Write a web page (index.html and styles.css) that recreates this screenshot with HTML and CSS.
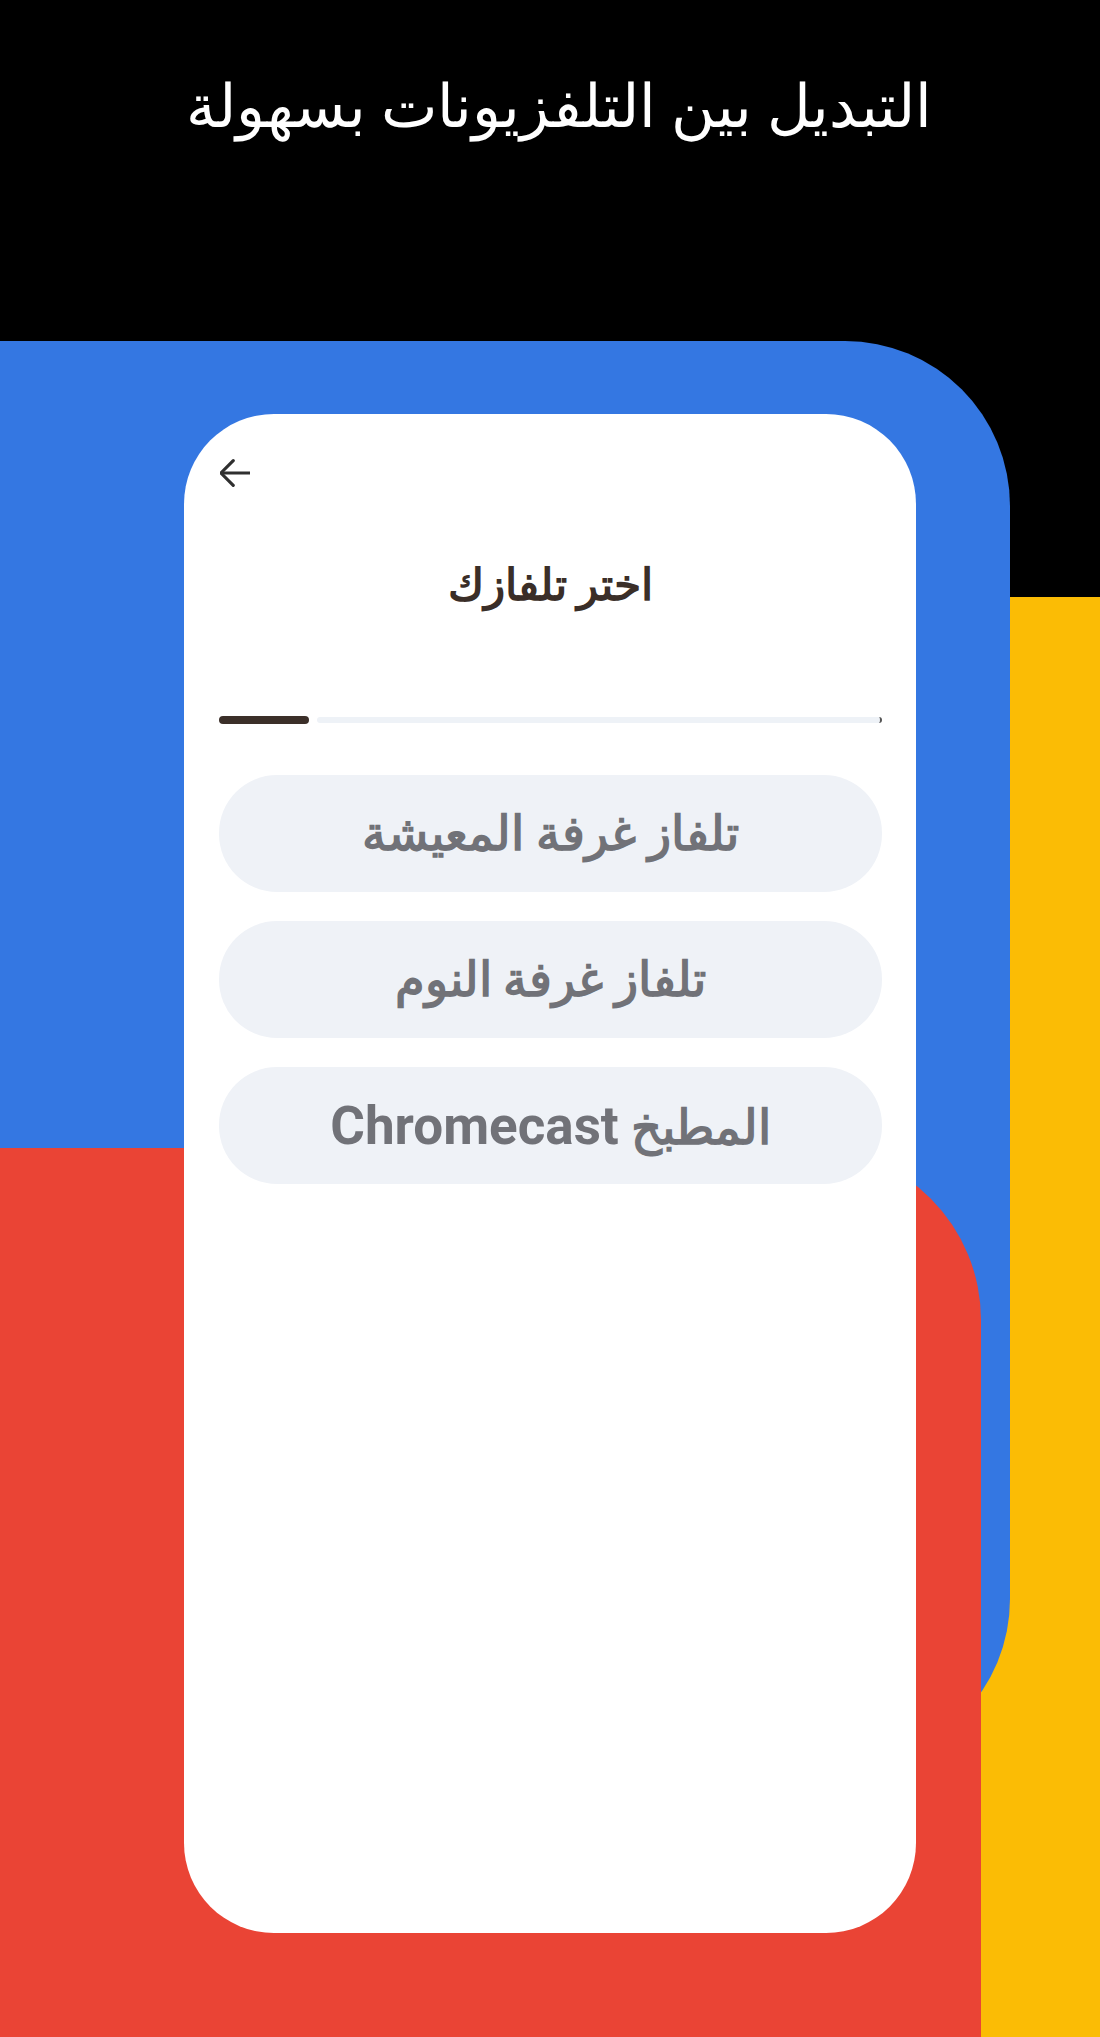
FILE: index.html
```html
<!DOCTYPE html>
<html lang="ar" dir="rtl">
<head>
    <meta charset="UTF-8">
    <meta name="viewport" content="width=device-width, initial-scale=1.0">
    <title>التبديل بين التلفزيونات</title>
    <link rel="stylesheet" href="styles.css">
</head>
<body>
    <header class="hero">
        <h1>التبديل بين التلفزيونات بسهولة</h1>
    </header>

    <main class="stage">
        <div class="shape yellow"></div>
        <div class="shape blue"></div>
        <div class="shape red"></div>

        <section class="phone">
            <div class="topbar">
                <svg class="back" width="30" height="30" viewBox="3.5 3.5 17 17" fill="none" stroke="#2f2f2f" stroke-width="1.8" stroke-linecap="round" stroke-linejoin="round">
                    <path d="M20 12H4.5"/>
                    <path d="M11 5l-7 7 7 7"/>
                </svg>
            </div>
            <h2 class="screen-title">اختر تلفازك</h2>
            <div class="progress">
                <span class="done"></span>
                <span class="track"></span>
            </div>
            <div class="tv-list">
                <button class="tv">تلفاز غرفة المعيشة</button>
                <button class="tv">تلفاز غرفة النوم</button>
                <button class="tv">المطبخ <span class="en">Chromecast</span></button>
            </div>
        </section>
    </main>
</body>
</html>
```
FILE: styles.css
```css
body {
    margin: 0;
    padding: 0;
    background-color: #000;
    font-family: 'Roboto', sans-serif;
    width: 1100px;
    height: 2037px;
    overflow: hidden;
}

.hero {
    height: 341px;
    direction: rtl;
}

.hero h1 {
    margin: 0;
    padding: 59px 0 0 18px;
    text-align: center;
    color: #fff;
    font-size: 60px;
    font-weight: normal;
    line-height: 96px;
}

/* all layers share one grid cell and stack in order */
.stage {
    display: grid;
    height: 1696px;
    direction: ltr;
}

.stage > * {
    grid-area: 1 / 1;
}

.shape {
    align-self: start;
    justify-self: start;
}

.yellow {
    background-color: #fbbc05;
    margin: 256px 0 0 900px;
    width: 200px;
    height: 1440px;
}

.blue {
    background-color: #3477e2;
    width: 1010px;
    height: 1423px;
    border-top-right-radius: 165px;
    border-bottom-right-radius: 165px;
}

.red {
    background-color: #ea4435;
    margin-top: 807px;
    width: 981px;
    height: 889px;
    border-top-right-radius: 172px;
}

.phone {
    align-self: start;
    justify-self: start;
    margin: 73px 0 0 184px;
    width: 732px;
    height: 1519px;
    background-color: #fff;
    border-radius: 90px;
    box-sizing: border-box;
    padding: 0 34px 0 35px;
}

.topbar {
    height: 74px;
    display: flex;
    align-items: flex-end;
}

.back {
    display: block;
    margin-left: 1px;
}

.screen-title {
    margin: 67px 0 0;
    text-align: center;
    direction: rtl;
    color: #3a2e28;
    font-size: 44px;
    font-weight: bold;
    line-height: 60px;
}

.progress {
    display: flex;
    align-items: center;
    gap: 8px;
    margin-top: 100px;
    height: 10px;
}

.progress .done {
    width: 90px;
    height: 8px;
    border-radius: 4px;
    background-color: #3b2f29;
}

.progress .track {
    flex: 1;
    height: 6px;
    border-radius: 3px;
    background-color: #eef2f7;
    border-right: 2px solid #555;
}

.tv-list {
    display: flex;
    flex-direction: column;
    gap: 29px;
    margin-top: 50px;
}

.tv {
    direction: rtl;
    height: 117px;
    border: none;
    border-radius: 58px;
    background-color: #eff2f7;
    color: #717278;
    font-family: 'Roboto', sans-serif;
    font-size: 48px;
    font-weight: bold;
    padding: 0 20px;
}

.tv .en {
    font-size: 53px;
}
```
